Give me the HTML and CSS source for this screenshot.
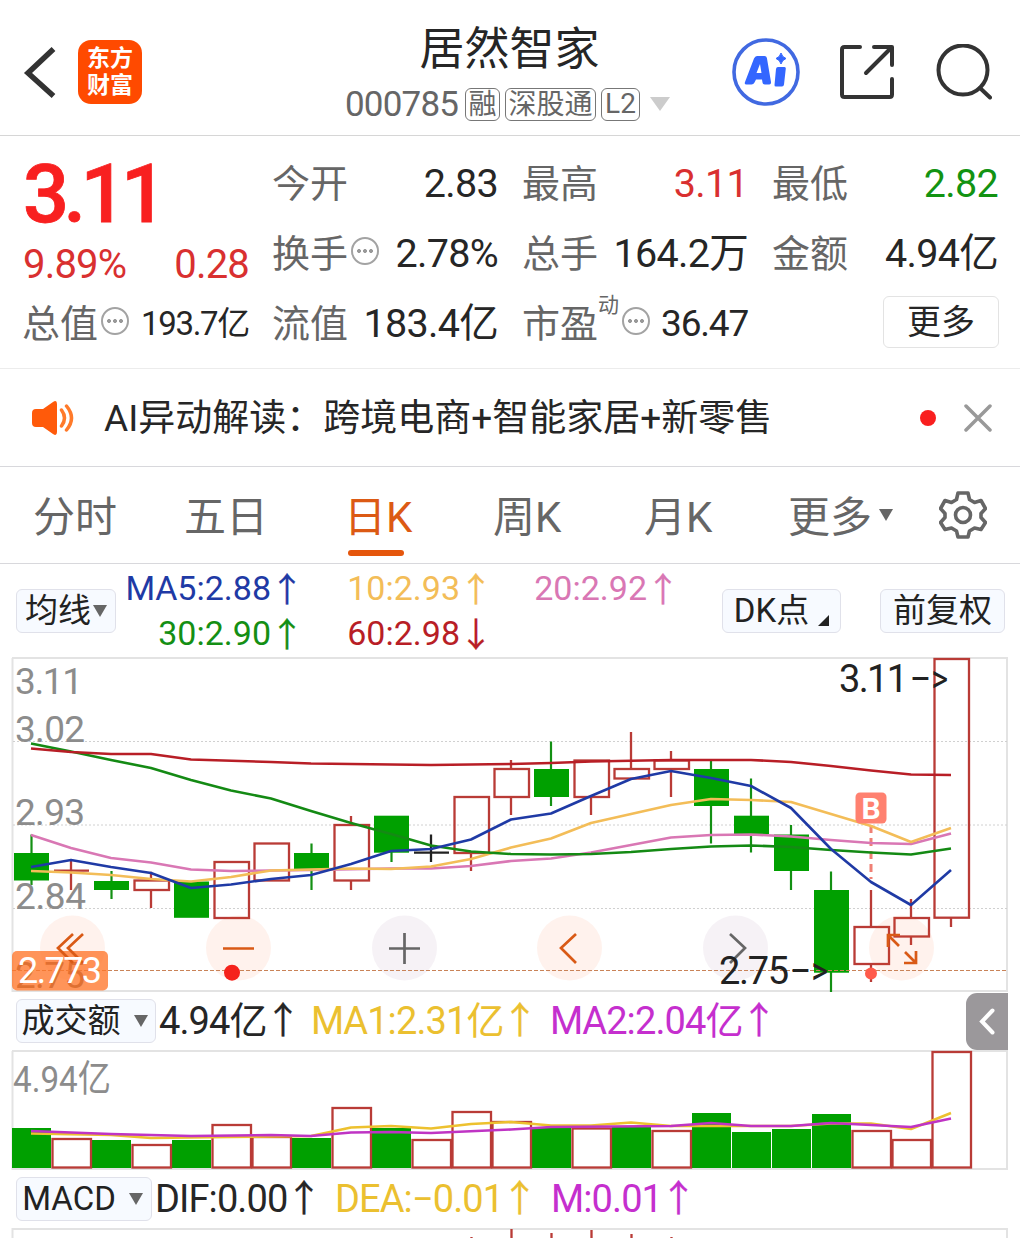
FILE: index.html
```html
<!DOCTYPE html>
<html lang="zh-CN">
<head>
<meta charset="utf-8">
<title>居然智家 000785</title>
<link rel="stylesheet" href="styles.css">
</head>
<body>
<header class="topbar">
  <div class="topbar-left">
    <svg class="back" width="34" height="54" viewBox="0 0 34 54"><path d="M31.500 4 6 28l25.500 23" fill="none" stroke="#333" stroke-width="5.500"/></svg>
    <div class="logo"><span>东方</span><span>财富</span></div>
  </div>
  <div class="stock">
    <h1>居然智家</h1>
    <div class="code-row">
      <span class="code">000785</span>
      <span class="tag rong">融</span><span class="tag sgt">深股通</span><span class="tag l2">L2</span>
      <svg width="20" height="14" viewBox="0 0 20 14"><path d="M0 0h20L10 14z" fill="#ccc"/></svg>
    </div>
  </div>
  <div class="actions">
    <svg width="68" height="68" viewBox="0 0 68 68">
      <circle cx="34" cy="34" r="32" fill="none" stroke="#4169e1" stroke-width="3.600"/>
      <path d="M25 18h7.500q2 0 2.400 2l4.100 24q.3 2.500-1.700 2.500h-4.500q-2 0-2.300-2l-.5-3h-6l-1.500 3q-1 2-3 2h-5q-2.500 0-1.500-2.500L22 20.500q1-2.500 3-2.500zm3 8-3.500 9h5z" fill="#3366ff" fill-rule="evenodd"/>
      <path d="M46 29h6.500q1.500 0 1.300 1.500L52 46.500q-.3 2-2 2h-6q-1.700 0-1.500-1.500L44 31q.3-2 2-2z" fill="#3366ff"/>
      <path d="M49 15q1 4 5 5.500-4 1.500-5 5.500-1-4-5-5.500 4-1.500 5-5.500z" fill="#3366ff" stroke="#3366ff"/>
    </svg>
    <svg width="54" height="54" viewBox="0 0 54 54" fill="none" stroke="#333" stroke-width="4" stroke-linecap="round" stroke-linejoin="round"><path d="M20 2H4.500Q2 2 2 4.500v45Q2 52 4.500 52h45q2.500 0 2.500-2.500V34M34 2h18v18M51 3 26 28"/></svg>
    <svg width="58" height="56" viewBox="0 0 58 56" fill="none" stroke="#333" stroke-width="4" stroke-linecap="round"><circle cx="29" cy="26" r="24.500"/><path d="m46 44 10 9.500"/></svg>
  </div>
</header>

<section class="quote">
  <div class="main-col">
    <div class="price">3.11</div>
    <div class="change"><span>9.89%</span><span>0.28</span></div>
    <div class="cell"><label>总值<i class="info"></i></label><b class="small">193.7亿</b></div>
  </div>
  <div class="col">
    <div class="cell"><label>今开</label><b>2.83</b></div>
    <div class="cell"><label>换手<i class="info"></i></label><b>2.78%</b></div>
    <div class="cell"><label>流值</label><b class="cn">183.4亿</b></div>
  </div>
  <div class="col">
    <div class="cell"><label>最高</label><b class="up">3.11</b></div>
    <div class="cell"><label>总手</label><b class="cn">164.2万</b></div>
    <div class="cell"><label>市盈<sup>动</sup><i class="info"></i></label><b class="mid">36.47</b></div>
  </div>
  <div class="col">
    <div class="cell"><label>最低</label><b class="down">2.82</b></div>
    <div class="cell"><label>金额</label><b class="cn">4.94亿</b></div>
    <button class="more">更多</button>
  </div>
</section>

<section class="notice">
  <svg width="44" height="36" viewBox="0 0 44 36"><path d="M4 9h7L21 2q4-2.500 4 2v28q0 4.500-4 2l-10-7H4q-4 0-4-4V13q0-4 4-4z" fill="#ff5a0a"/><path d="M29.500 10q6 8 0 16M34.500 6q10 12 0 24" fill="none" stroke="#ff7a2a" stroke-width="3.500" stroke-linecap="round"/></svg>
  <p>AI异动解读：跨境电商+智能家居+新零售</p>
  <span class="dot"></span>
  <svg width="28" height="28" viewBox="0 0 28 28"><path d="m2 2 24 24M26 2 2 26" stroke="#999" stroke-width="3.500" stroke-linecap="round"/></svg>
</section>

<nav class="tabs">
  <span>分时</span><span>五日</span><span class="active">日K</span><span class="k">周K</span><span class="k">月K</span>
  <span class="tab-more">更多<svg width="14" height="12" viewBox="0 0 14 12"><path d="M0 0h14L7 12z" fill="#666"/></svg></span>
  <svg class="gear" width="48" height="48" viewBox="0 0 48 48" fill="none" stroke="#666" stroke-width="3.600" stroke-linejoin="round"><path d="M19 2h10l1.500 6.500 5 3 6.500-2 4.500 8-4.500 5v4l4.500 5-4.500 7-6.500-1.500-5 3L29 46H19l-1.500-6-5-3L6 38.500l-4.500-7 4.500-5v-4l-4.500-5L6 9.500l6.500 2 5-3z"/><circle cx="24" cy="24" r="7.500"/></svg>
</nav>

<section class="ma-bar">
  <button class="chip avg">均线<svg width="14" height="12" viewBox="0 0 14 12"><path d="M0 0h14L7 12z" fill="#666"/></svg></button>
  <div class="ma-grid">
    <span class="blue">MA5:2.88<i>↑</i></span><span class="amber">10:2.93<i>↑</i></span><span class="pink">20:2.92<i>↑</i></span>
    <span class="green">30:2.90<i>↑</i></span><span class="crimson">60:2.98<i>↓</i></span>
  </div>
  <button class="chip dk">DK点<svg width="11" height="11" viewBox="0 0 11 11"><path d="M11 0v11H0z" fill="#222"/></svg></button>
  <button class="chip fq">前复权</button>
</section>

<svg class="chart" width="1020" height="335" viewBox="0 657 1020 335">
  <g class="frame"><path d="M12 658H1007V991H12.500V658"/></g>
  <path class="grid" d="M13 741.500H1007M13 825H1007M13 908.500H1007"/>
  <g class="down-candle">
    <path d="M31.500 834.500V885M111.500 871V899M311.500 843.500V890M391.500 852V862M551 741.500V806M711 761V843.500M751 778.500V852.500M791 825V890M831 871.500V992"/>
    <rect x="14" y="853" width="35" height="27.500"/><rect x="94" y="881" width="35" height="9"/><rect x="174" y="881.500" width="35" height="36.300"/><rect x="294" y="853" width="35" height="17"/><rect x="374" y="815.700" width="35" height="37"/><rect x="534" y="769" width="35" height="28"/><rect x="694" y="769" width="35" height="37"/><rect x="734" y="815.700" width="35" height="18.300"/><rect x="774" y="834.500" width="35" height="36.500"/><rect x="814" y="890" width="35" height="82.700"/>
  </g>
  <g class="up-candle">
    <path d="M71 860V890M54 870.700H89M151 871.700V880M151 890V908M351 816V825M351 881V890M471 853V871M511 760V769M511 797V815M591 797V815M631 732V769M671 751V760M671 769V797M871 890V927M871 964V982M911 899V918M911 936V945M951 918V927"/>
    <rect x="134.500" y="880.500" width="34.500" height="9.500"/><rect x="214.500" y="862" width="34.500" height="56"/><rect x="254.500" y="843.500" width="34.500" height="37"/><rect x="334.500" y="825" width="34.500" height="55.500"/><rect x="454.500" y="797" width="34.500" height="56"/><rect x="494.500" y="769" width="34.500" height="28"/><rect x="574.500" y="760.500" width="34.500" height="36.500"/><rect x="614.500" y="769" width="34.500" height="9.500"/><rect x="654.500" y="760.500" width="34.500" height="8.500"/><rect x="854.500" y="927" width="34.500" height="37"/><rect x="894.500" y="918" width="34.500" height="18.500"/><rect x="934.500" y="659" width="34.500" height="258.700"/>
  </g>
  <path class="flat-candle" d="M431 834.500V862M414 852.700H449"/>
  <path class="b-line" d="M871 825V879"/>
  <g class="axis">
    <text x="15" y="694" textLength="68">3.11</text><text x="15" y="742" textLength="70">3.02</text><text x="15" y="825" textLength="70">2.93</text><text x="15" y="909" textLength="71">2.84</text><text class="low" x="15" y="988" textLength="70">2.75</text>
  </g>
  <g class="line">
    <polyline stroke="#d977b4" points="31,835 71,848 111,858 151,862.500 191,869.500 231,871 311,870 391,868.500 431,868.500 471,866 511,861 551,858.500 591,852.500 631,845 671,837.500 711,835 751,834.500 791,836.500 831,840 871,843 911,844 951,833.500"/>
    <polyline stroke="#f3bd58" points="31,871 71,872.500 111,875 151,879 191,881.500 231,877 271,870.500 351,868.500 391,869 431,866.500 471,859 511,847.500 551,838.500 591,823 631,814 671,805 711,799 751,800 791,802 831,814 871,826 911,842 951,828"/>
    <polyline stroke="#148a14" points="31,743.500 71,751.500 111,760 151,768 191,780 231,790.500 271,798.500 311,811 351,823 391,834 431,845.500 471,851.500 511,854 551,854.500 591,854 631,852 671,849 711,846.500 751,845.500 791,847 831,850 871,852.500 911,854.500 951,848.500"/>
    <polyline stroke="#1f3aa5" points="31,867 71,860 111,867 151,873 191,888 231,884.500 271,879 311,875 351,864 391,851 431,849 471,839.500 511,819.500 551,813.500 591,796 631,779 671,771 711,778 751,786 791,808 831,849 871,882 911,905 951,870"/>
    <polyline stroke="#b81e26" points="31,748.500 71,752 111,754 151,754 191,759.500 271,762 311,763.500 431,765 511,764 551,763 591,761.500 671,760 751,760 791,762 831,766 871,770.500 911,774.500 951,775"/>
  </g>
  <rect x="855.500" y="792.500" width="31" height="31" rx="4.500" fill="#ff8170"/><text class="b-text" x="871" y="818.500">B</text>
  <g fill="#ff5a1f" fill-opacity=".08"><circle cx="72.500" cy="948" r="32.500"/><circle cx="238.500" cy="948" r="32.500"/><circle cx="569.500" cy="948" r="32.500"/><circle cx="901.500" cy="948" r="32.500"/></g>
  <g fill="#7a4b80" fill-opacity=".07"><circle cx="404.500" cy="948" r="32.500"/><circle cx="735.500" cy="948" r="32.500"/></g>
  <path class="dash" d="M12 970.500H1007"/>
  <rect x="12" y="951" width="96" height="39.500" rx="5" fill="#ff762a" fill-opacity=".78"/>
  <g fill="none" stroke="#d95a16" stroke-width="2.700">
    <path d="m73 934-15 14 15 15M83 934 68 948l15 15M223 948.500h31M576 934l-15 14 15 15"/>
    <path d="M888 947v-12h12M888 935l11 11M916 951v12h-12M916 963l-11-11"/>
  </g>
  <text class="price-tag" x="18" y="982.500" textLength="84">2.773</text>
  <path d="M389 948.500h31M404.500 933v31M730 934l15 14-15 15" fill="none" stroke="#666" stroke-width="2.700"/>
  <g class="marks"><text x="839" y="692" textLength="69">3.11</text><text x="910" y="692" textLength="38" lengthAdjust="spacingAndGlyphs">–&gt;</text><text x="719" y="984" textLength="70">2.75</text><text x="790" y="984" textLength="38" lengthAdjust="spacingAndGlyphs">–&gt;</text></g>
  <circle cx="232" cy="972.700" r="8" fill="#f5231c"/><circle cx="871" cy="973.500" r="6" fill="#ff5b4b"/>
</svg>

<section class="indicator turnover">
  <button class="chip">成交额<svg width="14" height="12" viewBox="0 0 14 12"><path d="M0 0h14L7 12z" fill="#666"/></svg></button>
  <span class="ind-a">4.94亿<i>↑</i></span><span class="ind-b gold">MA1:2.31亿<i>↑</i></span><span class="ind-c purple">MA2:2.04亿<i>↑</i></span>
  <span class="drawer"><svg width="16" height="27" viewBox="0 0 16 27"><path d="M13.500 2.500 3 13.500l10.500 11" fill="none" stroke="#fff" stroke-width="4" stroke-linecap="round"/></svg></span>
</section>

<svg class="chart" width="1020" height="120" viewBox="0 1050 1020 120">
  <g class="frame"><path d="M12 1051H1007V1169H12.500V1051"/></g>
  <g class="axis"><text x="13" y="1092" textLength="98" lengthAdjust="spacingAndGlyphs">4.94亿</text></g>
  <g class="down-candle">
    <rect x="12" y="1128" width="39" height="40"/><rect x="92" y="1140" width="39" height="28"/><rect x="172" y="1140" width="39" height="28"/><rect x="292" y="1138" width="39" height="30"/><rect x="372" y="1128" width="39" height="40"/><rect x="532" y="1127" width="39" height="41"/><rect x="612" y="1127" width="39" height="41"/><rect x="692" y="1113" width="39" height="55"/><rect x="732" y="1132" width="39" height="36"/><rect x="772" y="1129" width="39" height="39"/><rect x="812" y="1114" width="39" height="54"/>
  </g>
  <g class="up-candle">
    <rect x="52.500" y="1139" width="38.500" height="28.500"/><rect x="132.500" y="1145" width="38.500" height="22.500"/><rect x="212.500" y="1125" width="38.500" height="42.500"/><rect x="252.500" y="1137" width="38.500" height="30.500"/><rect x="332.500" y="1108" width="38.500" height="59.500"/><rect x="412.500" y="1140" width="38.500" height="27.500"/><rect x="452.500" y="1112" width="38.500" height="55.500"/><rect x="492.500" y="1122" width="38.500" height="45.500"/><rect x="572.500" y="1128.500" width="38.500" height="39"/><rect x="652.500" y="1131" width="38.500" height="36.500"/><rect x="852.500" y="1131" width="38.500" height="36.500"/><rect x="892.500" y="1140" width="38.500" height="27.500"/><rect x="932.500" y="1052" width="38.500" height="115.500"/>
  </g>
  <g class="line">
    <polyline stroke="#edc12f" points="31,1133.500 111,1135 151,1138 231,1137 311,1136 351,1127.500 391,1126 431,1128.500 471,1124 511,1122 551,1125.500 591,1125.500 631,1122.500 671,1126 711,1126 751,1126 791,1126 831,1123.500 871,1123.500 911,1129 951,1113"/>
    <polyline stroke="#bf34c4" points="31,1131 111,1134 191,1136 271,1135 311,1136 351,1132.500 391,1132 431,1133 511,1129.500 551,1127 671,1126 711,1123 751,1126 791,1126 831,1123 871,1125 911,1127 951,1118.500"/>
  </g>
</svg>

<section class="indicator macd">
  <button class="chip">MACD<svg width="14" height="12" viewBox="0 0 14 12"><path d="M0 0h14L7 12z" fill="#666"/></svg></button>
  <span class="ind-a">DIF:0.00<i>↑</i></span><span class="ind-b gold">DEA:−0.01<i>↑</i></span><span class="ind-c purple">M:0.01<i>↑</i></span>
</section>

<svg class="chart" width="1020" height="10" viewBox="0 1228 1020 10">
  <g class="frame"><path d="M12.500 1240V1229H1007V1240"/></g>
  <g class="up-candle"><path d="M471.500 1237v2M511.500 1229v10M551.500 1233v6M591.500 1230v9M631.500 1234v5M671.500 1237v2"/></g>
</svg>
</body>
</html>
```
FILE: styles.css
```css
* { box-sizing: border-box; }
body {
  margin: 0;
  width: 1020px;
  height: 1238px;
  overflow: hidden;
  background: #fff;
  color: #262626;
  font-family: Roboto, "Noto Sans CJK SC", sans-serif;
  font-kerning: none;
  white-space: nowrap;
}
svg { display: block; flex: none; }
button { font-family: inherit; color: inherit; padding: 0; margin: 0; white-space: nowrap; }
i { font-style: normal; }

/* header */
.topbar {
  height: 136px;
  border-bottom: 1px solid #d6d6d6;
  display: grid;
  grid-template-columns: 345px 326px 1fr;
}
.topbar-left { display: flex; align-items: center; padding: 9px 0 0 22px; gap: 22px; }
.logo {
  width: 64px; height: 64px;
  border-radius: 13px;
  background: #ff4a00;
  color: #fff;
  display: flex; flex-direction: column; align-items: center; justify-content: center;
  font-size: 23px; font-weight: 700; line-height: 27px;
}
.stock h1 { margin: 17px 0 0; text-align: center; font-size: 45px; font-weight: 400; line-height: 66px; padding-left: 3px; }
.code-row { display: flex; align-items: center; height: 42px; color: #666; }
.code { font-size: 35px; width: 120px; letter-spacing: -.8px; }
.tag {
  height: 33px; border: 1.500px solid #777; border-radius: 6px;
  display: flex; align-items: center; justify-content: center;
  font-size: 28px; line-height: 30px; margin-right: 5px; padding-top: 2px;
}
.rong { width: 35px; }
.sgt { width: 91px; }
.l2 { width: 39px; margin-right: 10px; padding-top: 0; }
.actions { display: flex; align-items: center; padding: 8px 0 0 61px; gap: 40px; }

/* quote */
.quote {
  height: 233px;
  border-bottom: 1px solid #ececec;
  padding: 12px 0 0 23px;
  display: grid;
  grid-template-columns: repeat(4, 225px);
  column-gap: 25px;
}
.cell { display: flex; justify-content: space-between; align-items: center; height: 70px; }
.cell label { display: flex; align-items: center; color: #666; font-size: 38px; margin: -6px 0 0 -1px; }
.cell b { font-weight: 400; font-size: 39.500px; letter-spacing: -.7px; }
.cell b.cn { margin-top: -7px; }
.cell b.small { font-size: 33px; letter-spacing: -1.300px; margin: -5px -1px 0 0; }
.cell b.mid { font-size: 37px; letter-spacing: -1.200px; }
.cell b.up { color: #d93030; }
.cell b.down { color: #129312; }
.info {
  width: 28px; height: 28px; margin: 2px 0 0 3px;
  border: 2px solid #a3a3a3; border-radius: 50%;
  background: radial-gradient(circle, #999 1.800px, transparent 2.200px) center / 6px 6px no-repeat,
    radial-gradient(circle, #999 1.800px, transparent 2.200px) 3px center / 6px 6px no-repeat,
    radial-gradient(circle, #999 1.800px, transparent 2.200px) 15px center / 6px 6px no-repeat;
}
.cell sup { font-size: 21px; line-height: 1; align-self: flex-start; margin-top: 2px; }
.price { height: 92px; line-height: 94px; font-size: 81px; font-weight: 500; -webkit-text-stroke: .8px; color: #f82020; letter-spacing: -5.500px; }
.change { height: 48px; display: flex; justify-content: space-between; align-items: center; font-size: 40px; letter-spacing: -.8px; color: #d93030; }
.change span:last-child { margin-right: -1px; }
.more {
  width: 116px; height: 52px; margin: 8px -1px 0 auto; display: block;
  border: 1.500px solid #e3e3e3; border-radius: 6px; background: #fff; font-size: 34px; line-height: 46px;
}

/* notice */
.notice { height: 98px; border-bottom: 1px solid #d8d8dc; display: flex; align-items: center; padding-left: 32px; }
.notice p { margin: 0 0 6px 28px; width: 816px; font-size: 37px; }
.dot { width: 16px; height: 16px; border-radius: 50%; background: #f91f1f; margin-right: 28px; }

/* tabs */
.tabs { height: 97px; border-bottom: 1px solid #d8d8dc; display: flex; color: #666; font-size: 42px; line-height: 102px; padding-left: 33px; }
.tabs span { width: 151px; flex: none; }
.tabs .active { color: #dc5a14; position: relative; padding-left: 9px; }
.tabs .active::after { content: ""; position: absolute; left: 13px; top: 83px; width: 56px; height: 6px; border-radius: 3px; background: #e5560c; }
.tabs .k { padding-left: 7px; }
.tabs .tab-more { display: flex; align-items: center; gap: 7px; height: 102px; }
.tab-more svg { margin-top: -6px; }
.gear { margin: 24px 0 0 0; }

/* moving averages */
.chip {
  display: flex; align-items: center; justify-content: center; flex: none;
  height: 44px; border: 1.500px solid #e0e1ea; border-radius: 6px; background: #f7faff;
  font-size: 33px; line-height: 40px; color: #222;
}
.ma-bar { height: 93px; display: flex; align-items: center; padding-left: 16px; }
.avg { width: 100px; gap: 2px; }
.ma-grid { display: grid; grid-template-columns: 187px 189px 187px; grid-auto-rows: 45px; line-height: 45px; font-size: 34px; text-align: right; width: 606px; }
.ma-grid i { display: inline-block; height: 45px; vertical-align: top; line-height: 49px; font-size: 34px; margin: 0 -1px 0 -1px; -webkit-text-stroke: .3px; }
.ma-grid span { height: 45px; }
.dk { width: 119px; gap: 9px; }
.dk svg { align-self: flex-end; margin-bottom: 6px; }
.fq { width: 125px; margin-left: 39px; }
.blue { color: #1f3aa5; } .amber { color: #f3bd58; } .pink { color: #d977b4; } .green { color: #148f14; } .crimson { color: #b81e26; }
.gold { color: #ebc030; } .purple { color: #c52fce; }

/* charts */
.frame { fill: none; stroke: #e3e3e3; stroke-width: 2; }
.grid { stroke: #d0d0d0; stroke-dasharray: 2 2; }
.axis { fill: #8c8c8c; font-size: 37px; }
.axis .low { fill: #6b5a50; }
.down-candle { fill: #00a000; stroke: none; }
.down-candle path { stroke: #139013; stroke-width: 2.200; }
.up-candle { fill: none; stroke: #b93b36; stroke-width: 2.300; }
.flat-candle { stroke: #222; stroke-width: 2.300; }
.line { fill: none; stroke-width: 2.600; stroke-linejoin: round; }
.b-line { stroke: #ef8075; stroke-width: 3; stroke-dasharray: 8 5; }
.b-text { fill: #fff; font-size: 30px; font-weight: 700; text-anchor: middle; }
.marks { fill: #222; font-size: 38px; }
.dash { stroke: #c98358; stroke-width: 1.200; stroke-dasharray: 4 2; }
.price-tag { fill: #fff; font-size: 36px; }

/* indicator rows */
.indicator { display: flex; align-items: center; padding-left: 16px; font-size: 38px; letter-spacing: -.9px; }
.indicator > span { flex: none; line-height: 58px; height: 58px; }
.indicator i { display: inline-block; height: 58px; vertical-align: top; line-height: 59px; font-size: 37px; margin-left: -2px; -webkit-text-stroke: .3px; }
.indicator .chip { letter-spacing: 0; }
.turnover { height: 58px; }
.turnover .chip { width: 140px; gap: 13px; padding-right: 3px; }
.turnover .ind-a { width: 155px; padding-left: 3px; }
.turnover .ind-b { width: 239px; }
.turnover .ind-c { width: 416px; }
.indicator > .drawer { width: 42px; height: 57px; border-radius: 11px 0 0 11px; background: #9b989b; display: flex; align-items: center; justify-content: center; }
.macd { height: 58px; }
.macd .chip { width: 136px; gap: 13px; padding-right: 3px; }
.macd .ind-a { width: 183px; padding-left: 3px; }
.macd .ind-b { width: 216px; }
```
